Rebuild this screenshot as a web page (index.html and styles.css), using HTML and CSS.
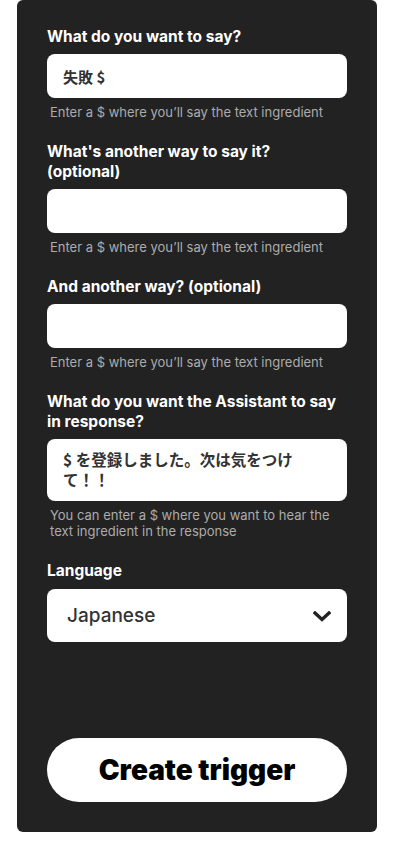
FILE: index.html
```html
<!DOCTYPE html>
<html lang="en">
<head>
<meta charset="utf-8">
<title>Create trigger</title>
<link rel="stylesheet" href="styles.css">
</head>
<body>
<main class="panel">
  <div class="field">
    <label class="label">What do you want to say?</label>
    <div class="input">失敗 $</div>
    <p class="hint">Enter a $ where you’ll say the text ingredient</p>
  </div>
  <div class="field">
    <label class="label">What's another way to say it? (optional)</label>
    <div class="input"></div>
    <p class="hint">Enter a $ where you’ll say the text ingredient</p>
  </div>
  <div class="field">
    <label class="label">And another way? (optional)</label>
    <div class="input"></div>
    <p class="hint">Enter a $ where you’ll say the text ingredient</p>
  </div>
  <div class="field">
    <label class="label">What do you want the Assistant to say in response?</label>
    <div class="input textarea">$ を登録しました。次は気をつけて！！</div>
    <p class="hint">You can enter a $ where you want to hear the text ingredient in the response</p>
  </div>
  <div class="field">
    <label class="label">Language</label>
    <div class="select">
      <span class="select-value">Japanese</span>
      <svg class="chevron" width="18" height="11" viewBox="0 0 18 11" aria-hidden="true">
        <path d="M2 2 L9 8.5 L16 2" fill="none" stroke="#222" stroke-width="3.4" stroke-linecap="square" stroke-linejoin="miter"/>
      </svg>
    </div>
  </div>
  <button class="submit">Create trigger</button>
</main>
</body>
</html>
```
FILE: styles.css
```css
html, body {
  margin: 0;
  padding: 0;
  background: #ffffff;
}

body {
  font-family: Inter, "Noto Sans CJK JP", sans-serif;
}

.panel {
  box-sizing: border-box;
  width: 360px;
  height: 832px;
  margin-left: 17px;
  background: #222222;
  border-radius: 6px;
  padding: 27px 30px 30px;
  display: flex;
  flex-direction: column;
}

.field {
  display: flex;
  flex-direction: column;
  margin-bottom: 22px;
}

.label {
  color: #ffffff;
  font-weight: 700;
  font-size: 15.5px;
  line-height: 20px;
  margin-bottom: 7px;
}

.input {
  box-sizing: border-box;
  background: #ffffff;
  border-radius: 8px;
  height: 44px;
  padding: 0 16px;
  display: flex;
  align-items: center;
  color: #333333;
  font-family: "Noto Sans CJK JP", Inter, sans-serif;
  font-weight: 600;
  font-size: 15px;
}

.textarea {
  height: 62px;
  align-items: flex-start;
  padding: 10px 16px;
  line-height: 20px;
  font-size: 15.5px;
}

.hint {
  margin: 6px 0 0 3px;
  color: #acacac;
  font-size: 13px;
  line-height: 16px;
}

.select {
  box-sizing: border-box;
  background: #ffffff;
  border-radius: 8px;
  height: 53px;
  margin-top: 1px;
  padding: 0 16px 0 20px;
  display: flex;
  align-items: center;
  justify-content: space-between;
}

.select-value {
  color: #333333;
  font-size: 19px;
  font-weight: 500;
}

.chevron {
  display: block;
  margin-top: 1px;
}

.submit {
  margin-top: auto;
  height: 64px;
  border: none;
  border-radius: 32px;
  background: #ffffff;
  color: #000000;
  font-family: Inter, sans-serif;
  font-weight: 900;
  font-size: 28px;
  cursor: pointer;
}
```
